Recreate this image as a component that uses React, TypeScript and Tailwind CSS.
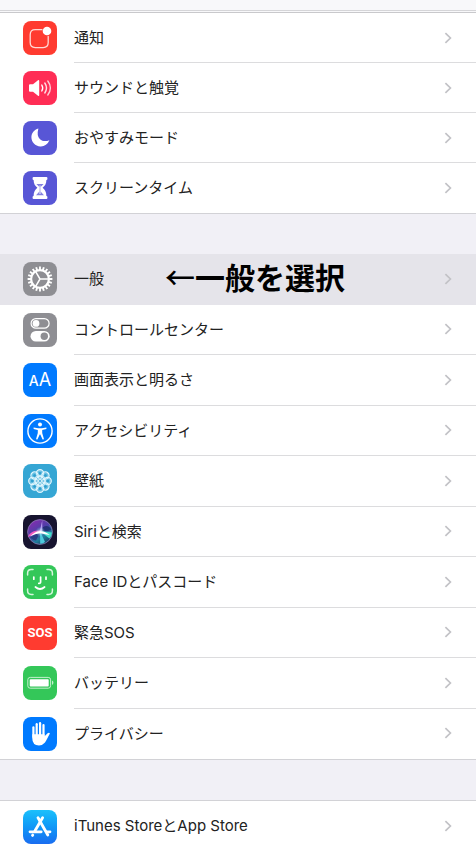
import type { ReactNode } from "react";
import clsx from "clsx";

interface SettingItem {
    id: string;
    label: string;
    tile: string;
    icon: ReactNode;
    note?: string;
}

const GEAR_TEETH = Array.from({ length: 20 }, (_, i) => i * 18);
const PETALS = [0, 45, 90, 135, 180, 225, 270, 315];

function Glyph({ children }: { children: ReactNode }) {
    return (
        <svg viewBox="0 0 34 34" className="size-full" fill="none" aria-hidden="true">
            {children}
        </svg>
    );
}

function NotificationIcon() {
    return (
        <Glyph>
            <path d="M19 8.7H12.2Q7.2 8.7 7.2 13.7V21.6Q7.2 26.6 12.2 26.6H20.2Q25.2 26.6 25.2 21.6V15.5" stroke="#ffd9d5" strokeWidth="1.3" strokeLinecap="round" />
            <circle cx="24" cy="10" r="4.3" fill="#fff" />
        </Glyph>
    );
}

function SoundIcon() {
    return (
        <Glyph>
            <path d="M6 14.2Q6 13.2 7 13.2H10L15 9.2Q16.2 8.6 16.2 10V24Q16.2 25.4 15 24.8L10 20.8H7Q6 20.8 6 19.8Z" fill="#fff" />
            <g stroke="#fff" strokeWidth="1.4" strokeLinecap="round">
                <path d="M18.8 14Q20.6 17 18.8 20" />
                <path d="M21.8 12Q25.2 17 21.8 22" opacity=".85" />
                <path d="M24.8 10Q30 17 24.8 24" opacity=".75" />
            </g>
        </Glyph>
    );
}

function MoonIcon() {
    return (
        <Glyph>
            <path d="M15.4 7.4C14 12.2 14.6 16 17 18.2C19.4 20.4 22.8 20.6 26.4 19.2C24.6 23.4 21.4 25.6 17.4 25.4C12.2 25.1 8.4 21.2 8.4 16.2C8.4 12 11.2 8.6 15.4 7.4Z" fill="#fff" />
        </Glyph>
    );
}

function HourglassIcon() {
    return (
        <Glyph>
            <path d="M10.6 6H23.4Q24.4 6 24.4 7V8Q24.4 9 23.4 9C23.4 13 21.8 14.8 19.6 16.8C21.8 18.8 23.4 20.8 23.4 25Q24.4 25 24.4 26V27Q24.4 28 23.4 28H10.6Q9.6 28 9.6 27V26Q9.6 25 10.6 25C10.6 20.8 12.2 18.8 14.4 16.8C12.2 14.8 10.6 13 10.6 9Q9.6 9 9.6 8V7Q9.6 6 10.6 6Z" fill="#fff" />
            <path d="M13.4 13H20.6L17.6 16V20.6L21 24.2H13L16.4 20.6V16Z" fill="#5856d6" opacity=".75" />
            <path d="M17 14.5V23" stroke="#fff" strokeWidth=".9" />
        </Glyph>
    );
}

function GearIcon() {
    return (
        <Glyph>
            <g stroke="#fff" strokeWidth="1.9">
                {GEAR_TEETH.map((angle) => (
                    <path key={angle} d="M17 4.6V8" transform={`rotate(${angle} 17 17)`} />
                ))}
            </g>
            <circle cx="17" cy="17" r="8.9" stroke="#fff" strokeWidth="2.2" />
            <path d="M17 17H25.5M17 17L12.8 9.8M17 17L12.8 24.2" stroke="#fff" strokeWidth="1.5" />
        </Glyph>
    );
}

function TogglesIcon() {
    return (
        <Glyph>
            <rect x="8.1" y="5.6" width="18" height="9.6" rx="4.8" stroke="#fff" strokeWidth="1.2" />
            <circle cx="13" cy="10.4" r="3.4" fill="#fff" />
            <rect x="7.5" y="18" width="19.2" height="10.6" rx="5.3" fill="#fff" />
            <circle cx="21.3" cy="23.3" r="3.7" fill="#8e8e93" />
        </Glyph>
    );
}

function AccessibilityIcon() {
    return (
        <Glyph>
            <circle cx="17" cy="17" r="12.1" stroke="#fff" strokeWidth="1.4" />
            <circle cx="17" cy="10.6" r="2" fill="#fff" />
            <path d="M10.6 13.4L15.2 14.2H18.8L23.4 13.4V14.9L19.2 16V19L21 25.2L19.6 25.6L17.3 20.4H16.7L14.4 25.6L13 25.2L14.8 19V16L10.6 14.9Z" fill="#fff" />
        </Glyph>
    );
}

function WallpaperIcon() {
    return (
        <Glyph>
            {PETALS.map((angle) => (
                <g key={angle} transform={`rotate(${angle} 17 17)`}>
                    <circle cx="17" cy="9.3" r="3.6" fill="#a9e0f4" fillOpacity=".45" stroke="#e2f6fd" strokeWidth="1.2" />
                    <circle cx="17" cy="9.3" r="1.4" fill="#2f9fcf" />
                    <ellipse cx="17" cy="13.4" rx="1.5" ry="2.2" stroke="#e2f6fd" strokeWidth=".8" />
                </g>
            ))}
            <circle cx="17" cy="17" r="1.5" fill="#35a6d4" stroke="#e2f6fd" strokeWidth=".8" />
        </Glyph>
    );
}

function SiriIcon() {
    return (
        <Glyph>
            <defs>
                <linearGradient id="siri-orb" x1="8" y1="5" x2="24" y2="30" gradientUnits="userSpaceOnUse">
                    <stop offset="0" stopColor="#8b2bb0" />
                    <stop offset=".45" stopColor="#4c3fa8" />
                    <stop offset=".7" stopColor="#1f7f9d" />
                    <stop offset="1" stopColor="#173253" />
                </linearGradient>
                <radialGradient id="siri-glow">
                    <stop offset="0" stopColor="#fff" stopOpacity=".9" />
                    <stop offset=".35" stopColor="#dffaff" stopOpacity=".5" />
                    <stop offset="1" stopColor="#6be3ea" stopOpacity="0" />
                </radialGradient>
            </defs>
            <circle cx="17" cy="17" r="12.4" fill="url(#siri-orb)" stroke="#8a7bb5" strokeWidth=".8" />
            <path d="M17 16C20 10 26 9 28.5 15C25 16 21 17 17 16Z" fill="#1b2768" opacity=".75" />
            <path d="M17 17L5 22C6.5 17.5 11 15.6 17 15.6Z" fill="#f05ac0" />
            <path d="M17 17L7 22.5Q10 25 13 25.5Z" fill="#253e83" />
            <path d="M17 16L29 17.4Q28.8 20.8 26.4 23.6Z" fill="#43dccb" />
            <path d="M17 16L17.2 28.8Q20.4 28.6 22 27Z" fill="#4cc9dd" />
            <path d="M16.6 17L19.2 5.4L19.4 16Z" fill="#b69df0" />
            <circle cx="17.4" cy="16.8" r="5" fill="url(#siri-glow)" />
            <path d="M6.8 21.4Q13 15.6 17.4 16.2Q22.6 16.4 26.8 20Q20 18.8 17.2 18.2Q12 18.4 6.8 21.4Z" fill="#fff" />
        </Glyph>
    );
}

function FaceIdIcon() {
    return (
        <Glyph>
            <g stroke="#d7f6de" strokeWidth="1.5" strokeLinecap="round">
                <path d="M4.6 10V8.2Q4.6 4.6 8.2 4.6H10" />
                <path d="M24 4.6H25.8Q29.4 4.6 29.4 8.2V10" />
                <path d="M29.4 24V25.8Q29.4 29.4 25.8 29.4H24" />
                <path d="M10 29.4H8.2Q4.6 29.4 4.6 25.8V24" />
            </g>
            <g stroke="#fff" strokeWidth="1.7" strokeLinecap="round">
                <path d="M10.8 12V14.2M23 12V14.2" />
                <path d="M17.6 12V17Q17.6 18.6 15.8 18.4" />
                <path d="M12.4 22Q17 26 21.6 22" />
            </g>
        </Glyph>
    );
}

function BatteryIcon() {
    return (
        <Glyph>
            <rect x="4.8" y="11.4" width="22.8" height="10.8" rx="2.4" stroke="#c3f0cd" strokeWidth="1" />
            <rect x="6.7" y="13.2" width="19" height="7.2" rx=".9" fill="#fff" />
            <path d="M29 14.6Q30.4 15.2 30.4 16.8Q30.4 18.4 29 19Z" fill="#c3f0cd" />
        </Glyph>
    );
}

function HandIcon() {
    return (
        <Glyph>
            <g stroke="#fff" strokeWidth="2.2" strokeLinecap="round">
                <path d="M10.4 10.4V20" />
                <path d="M13.7 7.2V19" />
                <path d="M17.1 6.2V19" />
                <path d="M20.5 8V19" />
            </g>
            <path d="M9.3 17.2H21.6V19.2L24.6 16.2Q26.4 15.2 26.9 16.6C24.6 20.4 23.8 23.2 22 25.6Q19.8 28.4 16 28.4Q9.3 28.4 9.3 21.6Z" fill="#fff" />
        </Glyph>
    );
}

function AppStoreIcon() {
    return (
        <Glyph>
            <g stroke="#fff" strokeWidth="2.8" strokeLinecap="round">
                <path d="M19.6 7.8L12 20.8" />
                <path d="M15 7.8L24.8 25" />
                <path d="M7 21.8H18.2M23.4 21.8H27" />
                <path d="M9.8 25L9.5 25.4" />
            </g>
        </Glyph>
    );
}

const groups: { id: string; className: string; items: SettingItem[] }[] = [
    {
        id: "alerts",
        className: "min-h-[201px] border-b",
        items: [
            { id: "notifications", label: "通知", tile: "bg-[#ff3b30]", icon: <NotificationIcon /> },
            { id: "sounds", label: "サウンドと触覚", tile: "bg-[#ff2d55]", icon: <SoundIcon /> },
            { id: "dnd", label: "おやすみモード", tile: "bg-[#5856d6]", icon: <MoonIcon /> },
            { id: "screen-time", label: "スクリーンタイム", tile: "bg-[#5856d6]", icon: <HourglassIcon /> },
        ],
    },
    {
        id: "device",
        className: "mt-10 min-h-[506px] border-b",
        items: [
            { id: "general", label: "一般", tile: "bg-[#8e8e93]", icon: <GearIcon />, note: "一般を選択" },
            { id: "control-center", label: "コントロールセンター", tile: "bg-[#8e8e93]", icon: <TogglesIcon /> },
            {
                id: "display",
                label: "画面表示と明るさ",
                tile: "bg-[#007aff]",
                icon: (
                    <span className="flex items-baseline text-white">
                        <span className="text-sm font-medium">A</span>
                        <span className="text-lg">A</span>
                    </span>
                ),
            },
            { id: "accessibility", label: "アクセシビリティ", tile: "bg-[#007aff]", icon: <AccessibilityIcon /> },
            { id: "wallpaper", label: "壁紙", tile: "bg-[#35a6d4]", icon: <WallpaperIcon /> },
            { id: "siri", label: "Siriと検索", tile: "bg-[#17142f]", icon: <SiriIcon /> },
            { id: "face-id", label: "Face IDとパスコード", tile: "bg-[#34c759]", icon: <FaceIdIcon /> },
            {
                id: "sos",
                label: "緊急SOS",
                tile: "bg-[#ff3b30]",
                icon: <span className="font-['Roboto',sans-serif] text-[13px] font-bold text-white">SOS</span>,
            },
            { id: "battery", label: "バッテリー", tile: "bg-[#34c759]", icon: <BatteryIcon /> },
            { id: "privacy", label: "プライバシー", tile: "bg-[#007aff]", icon: <HandIcon /> },
        ],
    },
    {
        id: "store",
        className: "mt-10 min-h-[52px] border-t",
        items: [
            { id: "app-store", label: "iTunes StoreとApp Store", tile: "bg-linear-to-b from-[#1cc0fb] to-[#1a6cf0]", icon: <AppStoreIcon /> },
        ],
    },
];

function SettingRow({ item, isLast }: { item: SettingItem; isLast: boolean }) {
    const selected = Boolean(item.note);

    return (
        <li className="relative">
            <button
                type="button"
                className={clsx("flex size-full items-center pl-[23px] text-left", selected && "bg-[#e5e4ea]")}
            >
                <span className={clsx("flex size-[34px] shrink-0 items-center justify-center overflow-hidden rounded-lg", item.tile)}>
                    {item.icon}
                </span>
                <span
                    className={clsx(
                        "ml-[17px] flex flex-1 items-center self-stretch border-b pr-6",
                        isLast || selected ? "border-transparent" : "border-[#dcdcde]"
                    )}
                >
                    <span className="flex-1 pt-px text-[15px] text-[#222]">{item.label}</span>
                    <svg viewBox="0 0 8 12" className="h-3 w-2" fill="none" aria-hidden="true">
                        <path d="M1.4 1.2L6.4 6L1.4 10.8" stroke="#c2c2c6" strokeWidth="1.7" />
                    </svg>
                </span>
            </button>

            {/* Hint laid over the selected row */}
            {item.note && (
                <p className="pointer-events-none absolute inset-y-0 left-[165px] flex items-center pb-1.5 font-['Noto_Sans_CJK_JP',sans-serif] text-[30px] leading-none text-black">
                    <span className="font-medium">←</span>
                    <span className="font-bold">{item.note}</span>
                </p>
            )}
        </li>
    );
}

export default function App() {
    return (
        <div className="h-screen overflow-hidden bg-[#f1f0f6] font-['Inter','Noto_Sans_CJK_JP',sans-serif]">
            <header className="h-[13px] border-b border-[#c9c9cc] bg-[#f8f8fa]">
                <div className="h-[11px] border-b border-[#d5d5d8]" />
            </header>

            <main>
                {groups.map((group) => (
                    <ul key={group.id} className={clsx("grid auto-rows-fr border-[#d2d2d6] bg-white", group.className)}>
                        {group.items.map((item, idx) => (
                            <SettingRow key={item.id} item={item} isLast={idx === group.items.length - 1} />
                        ))}
                    </ul>
                ))}
            </main>
        </div>
    );
}
